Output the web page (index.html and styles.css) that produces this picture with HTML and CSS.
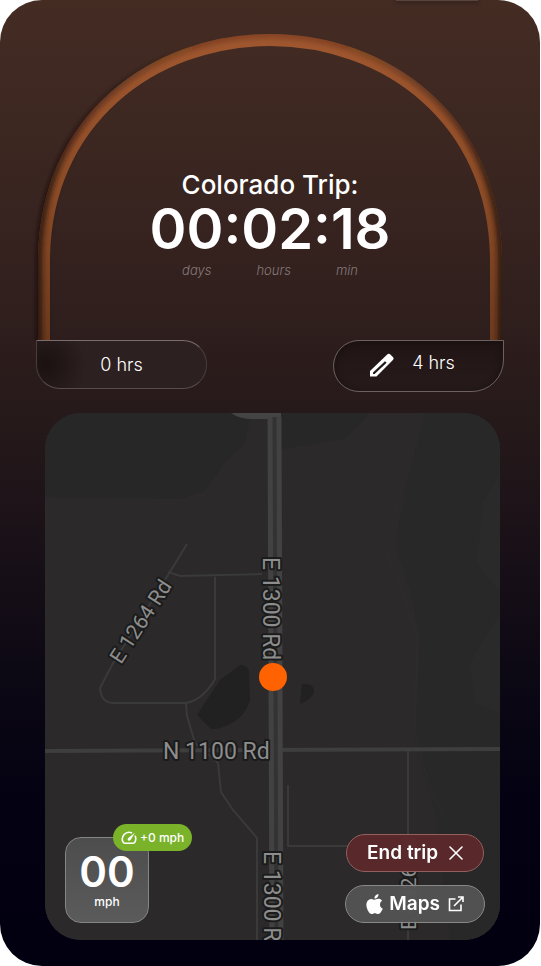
FILE: index.html
```html
<!DOCTYPE html>
<html lang="en">
<head>
    <meta charset="UTF-8">
    <meta name="viewport" content="width=device-width, initial-scale=1.0">
    <title>Colorado Trip</title>
    <link rel="stylesheet" href="styles.css">
</head>
<body>

<main class="phone">
    <section class="trip">
        <div class="dial">
            <svg class="dial-arc" viewBox="0 0 468 306" aria-hidden="true">
                <defs>
                    <linearGradient id="band" x1="0" y1="0" x2="0" y2="306" gradientUnits="userSpaceOnUse">
                        <stop offset="0" stop-color="#a0572f"/>
                        <stop offset="0.5" stop-color="#8c4c27"/>
                        <stop offset="1" stop-color="#6b3a1e"/>
                    </linearGradient>
                    <linearGradient id="shade" x1="0" y1="0" x2="0" y2="306" gradientUnits="userSpaceOnUse">
                        <stop offset="0" stop-color="#2a1712" stop-opacity="0.2"/>
                        <stop offset="0.5" stop-color="#2a1712" stop-opacity="0.8"/>
                        <stop offset="1" stop-color="#2a1712" stop-opacity="0.9"/>
                    </linearGradient>
                    <linearGradient id="side-shadow" x1="0" y1="0" x2="150" y2="0" gradientUnits="userSpaceOnUse">
                        <stop offset="0" stop-color="#140b0a" stop-opacity="0.6"/>
                        <stop offset="1" stop-color="#140b0a" stop-opacity="0"/>
                    </linearGradient>
                    <filter id="soft" x="-10%" y="-10%" width="120%" height="120%">
                        <feGaussianBlur stdDeviation="2"/>
                    </filter>
                    <clipPath id="above-limits">
                        <path d="M-20-20H488V306H-20z"/>
                    </clipPath>
                    <mask id="band-mask" maskUnits="userSpaceOnUse" x="0" y="-10" width="468" height="316">
                        <path class="arc" stroke="#fff" d="M8 306V228C8 84 120 6 234 6S460 84 460 228V306"/>
                    </mask>
                </defs>
                <g clip-path="url(#above-limits)">
                    <path class="arc" stroke="url(#side-shadow)" filter="url(#soft)" d="M6 320V227C6 83 118 5 232 5"/>
                </g>
                <path class="arc" stroke="url(#band)" d="M8 306V228C8 84 120 6 234 6S460 84 460 228V306"/>
                <g mask="url(#band-mask)">
                    <path class="arc-shade" stroke="url(#shade)" filter="url(#soft)" d="M2 320V228C2 80 116 0 234 0S466 80 466 228V320"/>
                </g>
            </svg>
            <div class="dial-text">
                <h1 class="trip-name">Colorado Trip:</h1>
                <p class="trip-time">00:02:18</p>
                <div class="trip-units">
                    <span>days</span>
                    <span>hours</span>
                    <span>min</span>
                </div>
            </div>
        </div>
        <div class="limits">
            <div class="limit limit-start">0 hrs</div>
            <button class="limit limit-end" type="button" aria-label="Edit trip length, 4 hrs">
                <svg class="icon-pencil" viewBox="0 0 24 24" aria-hidden="true">
                    <path fill="#fff" fill-rule="evenodd" d="M0 18 17.200 1.400q1.600-1.400 3.200 0l2.500 2.500q1.400 1.500 0 3.100L6.500 23.500H0zM3 19.400V21h1.600L16.600 9.800 15 8.200z"/>
                </svg>
                <span>4 hrs</span>
            </button>
        </div>
    </section>

    <section class="map">
        <svg class="map-canvas" viewBox="0 0 455 527" preserveAspectRatio="xMidYMid slice" role="img" aria-label="Map">
            <rect width="455" height="527" fill="#2b292a"/>
            <!-- terrain -->
            <path fill="#282727" d="M0 0H206L200 30 178 52 160 78 135 86 0 84zM236 0H325L300 26 236 36z"/>
            <path fill="#292829" d="M380 0 362 70 350 132 366 180 375 227 370 327 390 400 405 527H455V0z"/>
            <path fill="#2b2a2a" d="M455 60 438 90 432 150 455 180zM455 200 425 250 430 290 455 300z"/>
            <path fill="none" stroke="#2e2c2d" d="M372 0 360 60 341 135 352 165 372 225 370 320 386 380 398 400"/>
            <path fill="#212121" d="M195 252Q203 252 204 259L205 287Q200 304 185 311T165 315L152 302 175 267zM257 271Q268 270 269 277T255 291z"/>
            <!-- roads -->
            <g fill="none" stroke="#3a3a3a" stroke-width="2">
                <path d="M142 131 123 162 67 252 55 275Q56 290 69 290H141Q158 287 170 266V164"/>
                <path d="M123 159 135 163 217 161"/>
                <path d="M141 290 142 303 150 330 173 350 176 379 188 397 212 425V527"/>
                <path d="M363 337V527M243 372V433H355"/>
            </g>
            <path fill="none" stroke="#3e3e3e" stroke-width="4" d="M0 338 455 336"/>
            <path fill="#444" d="M186 0H236V6H208Q194 6 186 0z"/>
            <path fill="none" stroke="#333" stroke-width="12" d="M230 4V527"/>
            <path fill="none" stroke="#424242" stroke-width="5" d="M225 4 227 527M234 4 236 527"/>
            <!-- road names -->
            <g class="road-name">
                <text transform="translate(218 144) rotate(90)">E 1300 Rd</text>
                <text transform="translate(219 438) rotate(90)">E 1300 Rd</text>
                <text class="road-minor" transform="translate(76 252) rotate(-57)">E 1264 Rd</text>
                <text class="road-minor" transform="translate(371 517) rotate(-90)">E 1326 Rd</text>
                <text x="118" y="346">N 1100 Rd</text>
            </g>
            <circle cx="228" cy="264" r="14" fill="#ff6200"/>
        </svg>

        <div class="map-controls">
            <div class="speed">
                <strong class="speed-value">00</strong>
                <span class="speed-unit">mph</span>
                <span class="speed-badge">
                    <svg class="icon-gauge" viewBox="0 0 16 14" aria-hidden="true">
                        <path fill="none" stroke="#fff" stroke-width="1.600" stroke-linecap="round" stroke-linejoin="round" d="M10.500 1.700A6.800 6.800 0 0 0 2 11q.6 1.200 1.800 1.200h8.400q1.200 0 1.800-1.200A7 7 0 0 0 14.300 5.300"/>
                        <path fill="#fff" d="M14 1.800 9.500 9Q8.300 10.300 7 9.200 6 8 7.200 6.900z"/>
                    </svg>
                    +0 mph
                </span>
            </div>
            <div class="actions">
                <button class="action action-end" type="button">
                    End trip
                    <svg class="icon-close" viewBox="0 0 14 14" aria-hidden="true">
                        <path fill="none" stroke="#fff" stroke-width="1.600" stroke-linecap="round" d="M1 1 13 13M13 1 1 13"/>
                    </svg>
                </button>
                <a class="action action-maps" href="#maps">
                    <svg class="icon-apple" viewBox="2 0 20 24" aria-hidden="true">
                        <path fill="#fff" d="M12.152 6.896c-.948 0-2.415-1.078-3.960-1.040-2.040.027-3.910 1.183-4.961 3.014-2.117 3.675-.546 9.103 1.519 12.090 1.013 1.454 2.208 3.090 3.792 3.039 1.520-.065 2.090-.987 3.935-.987 1.831 0 2.350.987 3.960.948 1.637-.026 2.676-1.480 3.676-2.948 1.156-1.688 1.636-3.325 1.662-3.415-.039-.013-3.182-1.221-3.220-4.857-.026-3.040 2.480-4.494 2.597-4.559-1.429-2.090-3.623-2.324-4.390-2.376-2-.156-3.675 1.090-4.610 1.090zM15.530 3.830c.843-1.012 1.400-2.427 1.245-3.830-1.207.052-2.662.805-3.532 1.818-.780.896-1.454 2.338-1.273 3.714 1.338.104 2.715-.688 3.559-1.701"/>
                    </svg>
                    <span class="action-label">Maps</span>
                    <svg class="icon-open" viewBox="0 0 16 16" aria-hidden="true">
                        <path fill="none" stroke="#fff" stroke-width="1.600" d="M7.500 3H1.500V14.500H13V8.500M10 1H15V6M15 1 6 10"/>
                    </svg>
                </a>
            </div>
        </div>
    </section>
</main>

</body>
</html>
```

FILE: styles.css
```css
* {
    box-sizing: border-box;
    margin: 0;
    padding: 0;
}

body {
    background-color: #fff;
    color: #fff;
    font-family: Inter, "Liberation Sans", sans-serif;
    padding-right: 1px;
}

button {
    border: none;
    color: inherit;
    cursor: pointer;
    font-family: inherit;
}

.phone {
    position: relative;
    display: flex;
    flex-direction: column;
    min-height: 100vh;
    padding: 34px 36px 26px;
    border-radius: 42px;
    overflow: hidden;
    background: linear-gradient(#442c23 0%, #35221f 26%, #271a1a 42%, #1a1118 56%, #0c0814 70%, #030112 84%, #020010 100%);
}

/* bottom edge of the menu above the dial */
.phone::before {
    content: "";
    position: absolute;
    top: 0;
    right: 62px;
    width: 82px;
    height: 1px;
    background: #56443d;
    box-shadow: 0 1px 4px 1px rgba(0, 0, 0, 0.3);
}

.dial {
    display: grid;
}

.dial-arc, .dial-text {
    grid-area: 1 / 1;
}

.dial-arc {
    display: block;
    width: 100%;
    overflow: visible;
}

.arc {
    fill: none;
    stroke-width: 12;
}

.arc-shade {
    fill: none;
    stroke-width: 9;
}

.dial-text {
    display: flex;
    flex-direction: column;
    align-items: center;
    padding-top: 135px;
}

.trip-name {
    font-size: 26px;
    font-weight: 500;
    line-height: 32px;
}

.trip-time {
    font-size: 56px;
    font-weight: 600;
    line-height: 56px;
}

.trip-units {
    display: flex;
    gap: 45px;
    margin-top: 4px;
    color: #85797a;
    font-size: 13px;
    font-style: italic;
    font-weight: 300;
    line-height: 18px;
}

.limits {
    display: flex;
    justify-content: space-between;
    align-items: flex-start;
}

.limit {
    display: flex;
    align-items: center;
    justify-content: center;
    flex: 0 1 171px;
    border: 1px solid #6e6060;
    font-size: 18px;
    font-weight: 300;
    line-height: 24px;
}

.limit-start {
    padding: 12px 0 11px;
    border-color: #7a6d6c #4a3c3c #5a4c4c #4a3c3c;
    border-radius: 0 24px 24px 24px;
    background: radial-gradient(circle at 5% 50%, #1b1111 0%, rgba(27, 17, 17, 0) 25%), #2c2020;
}

.limit-end {
    gap: 18px;
    padding: 8px 12px 14px 0;
    border-radius: 26px 0 32px 26px;
    background: linear-gradient(#201414, #271b1b);
    box-shadow: inset 0 0 8px rgba(0, 0, 0, 0.3);
}

.icon-pencil {
    width: 24px;
    height: 24px;
    margin-top: 4px;
}

.map {
    position: relative;
    display: flex;
    flex: 1;
    margin: 21px 4px 0 9px;
    border-radius: 36px;
    overflow: hidden;
    background: #2b292a;
}

.map-canvas {
    position: absolute;
    inset: 0;
    width: 100%;
    height: 100%;
}

.road-name {
    fill: #8d8d8d;
    stroke: #1b1b1b;
    stroke-width: 4px;
    stroke-linejoin: round;
    paint-order: stroke;
    font-family: Roboto, sans-serif;
    font-size: 23px;
}

.road-minor {
    font-size: 21px;
}

.map-controls {
    position: relative;
    display: flex;
    flex: 1;
    align-items: flex-end;
    justify-content: space-between;
    padding: 0 15px 17px 20px;
}

.speed {
    position: relative;
    display: flex;
    flex-direction: column;
    align-items: center;
    width: 84px;
    padding: 12px 0;
    border: 1px solid #858585;
    border-radius: 16px;
    background: linear-gradient(#4d4d4d, #5b5b5b);
}

.speed-value {
    font-size: 42px;
    font-weight: 600;
    line-height: 44px;
}

.speed-unit {
    font-size: 12px;
    font-weight: 500;
    line-height: 16px;
}

.speed-badge {
    position: absolute;
    top: -14px;
    left: 47px;
    display: flex;
    align-items: center;
    gap: 3px;
    padding: 5px 8px;
    border-radius: 14px;
    background: #7ab22a;
    font-size: 12px;
    font-weight: 500;
    line-height: 17px;
    white-space: nowrap;
}

.icon-gauge {
    width: 16px;
    height: 14px;
}

.actions {
    display: flex;
    flex-direction: column;
    align-items: center;
    gap: 13px;
}

.action {
    display: flex;
    align-items: center;
    padding: 6px 20px;
    border: 1px solid;
    border-radius: 19px;
    color: #fff;
    font-size: 19px;
    font-weight: 600;
    line-height: 24px;
    text-decoration: none;
    backdrop-filter: blur(4px);
}

.action-end {
    gap: 11px;
    border-color: #94605f;
    background: rgba(92, 40, 42, 0.95);
}

.action-maps {
    border-color: #888;
    background: rgba(88, 88, 88, 0.85);
}

.action-label {
    margin: 0 8px 0 6px;
}

.icon-close {
    width: 14px;
    height: 14px;
}

.icon-apple {
    width: 17px;
    height: 20px;
}

.icon-open {
    width: 16px;
    height: 16px;
}
```
